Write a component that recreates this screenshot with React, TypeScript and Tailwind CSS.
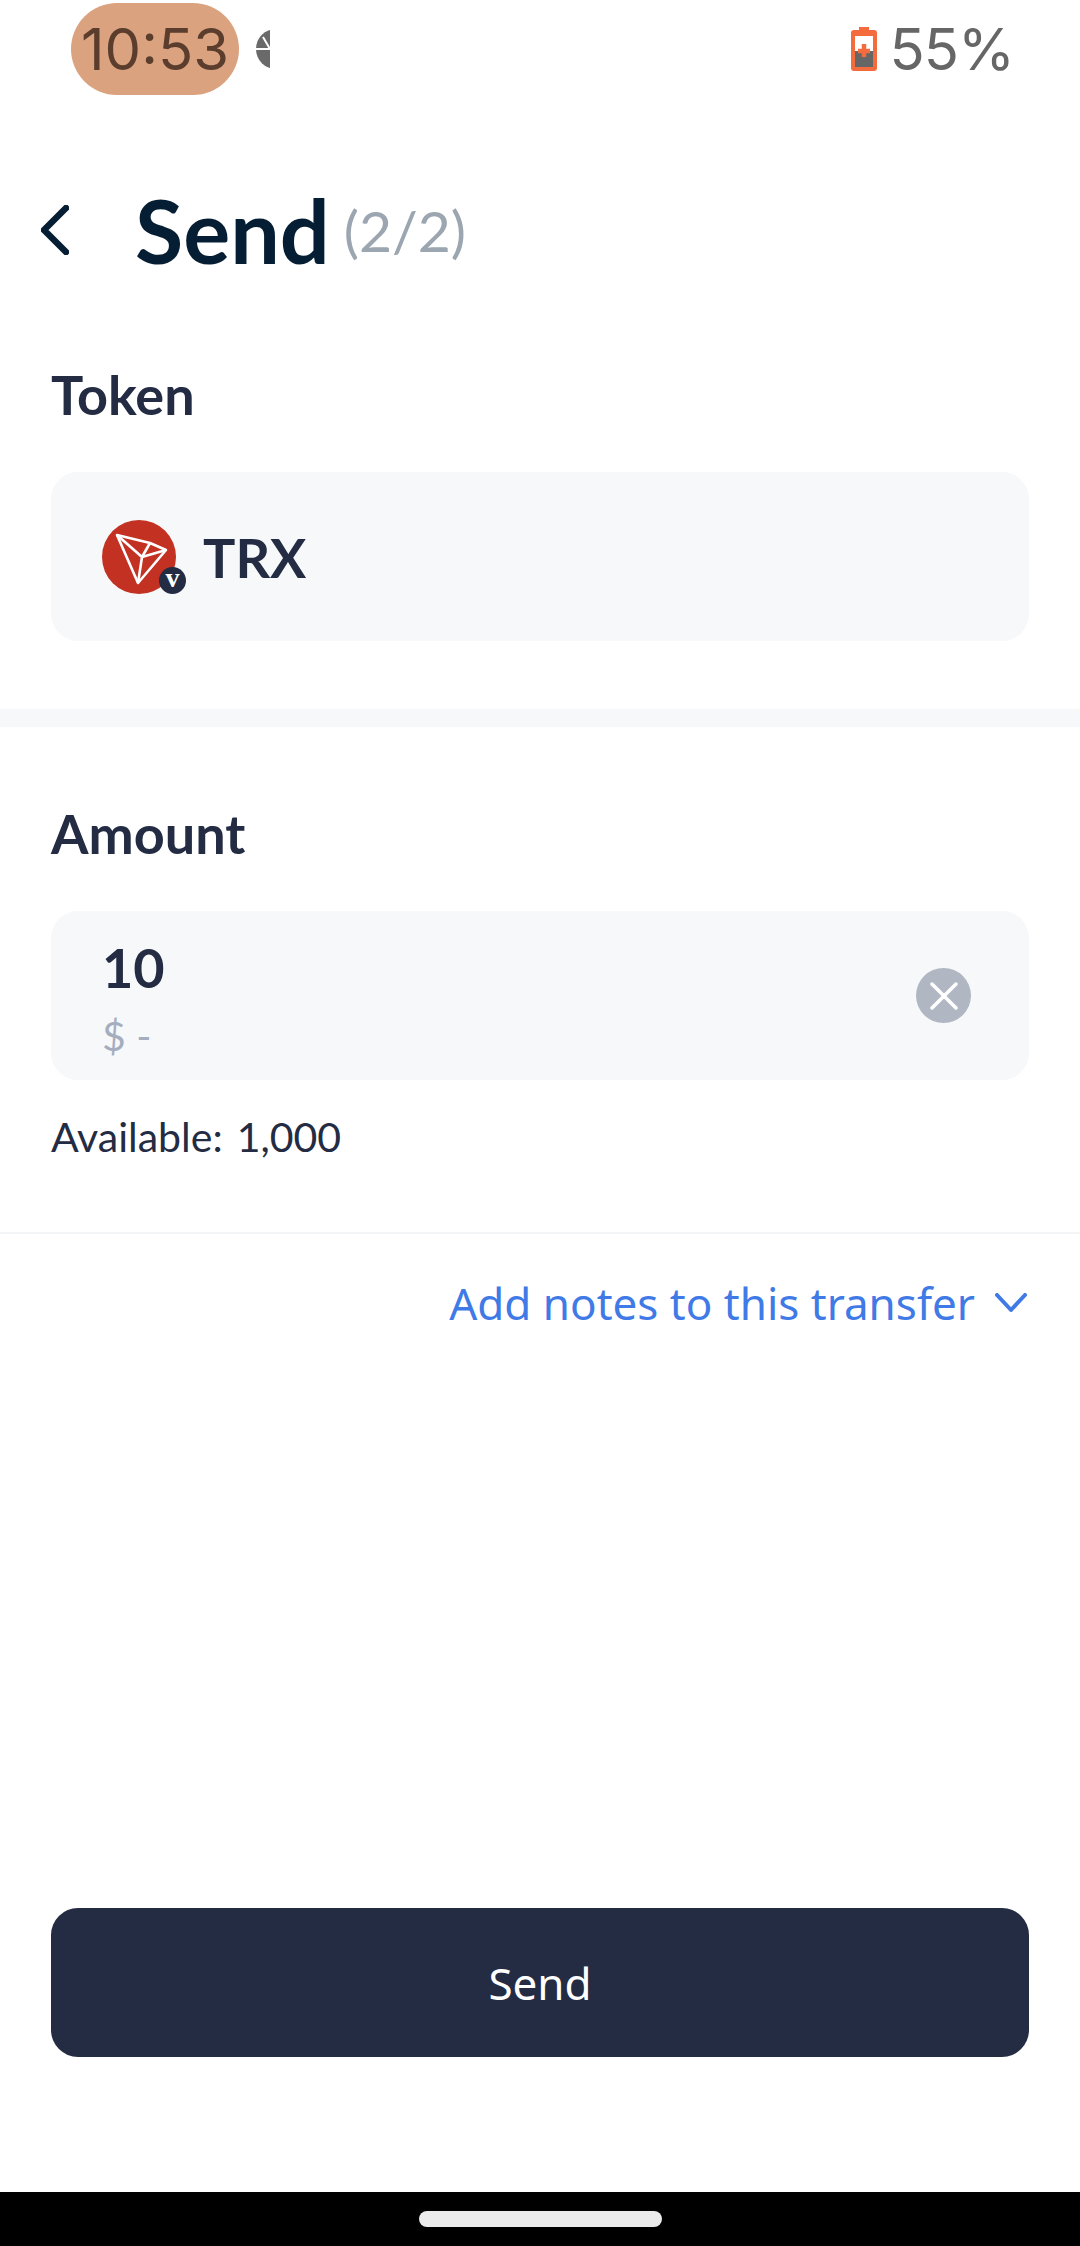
const lato = "font-['Lato',sans-serif]";

const Field = ({ children }: { children: React.ReactNode }) => (
	<div className="flex items-center justify-between h-[169px] rounded-[27px] bg-[#f7f8fa] pl-[51px] pr-[58px]">{children}</div>
);

const TronIcon = () => (
	<div className="relative w-[74px] h-[74px]">
		<svg viewBox="0 0 74 74" className="w-[74px] h-[74px]">
			<circle cx="37" cy="37" r="37" fill="#c23122" />
			<g fill="none" stroke="#fff" strokeWidth="2.6" strokeLinejoin="round">
				<path d="M15 15 L36 63 L64 30 L48 23 Z" />
				<path d="M15 15 L40 37 L36 63" />
				<path d="M40 37 L64 30" />
				<path d="M40 37 L48 23" />
			</g>
		</svg>
		<div className="absolute right-[-10px] bottom-0 w-[27px] h-[27px] rounded-full bg-[#232c43] flex items-center justify-center text-white text-[28px] pb-[4px] font-bold leading-none font-['Liberation_Serif',serif]">
			v
		</div>
	</div>
);

export default function App() {
	return (
		<div className={`w-[1080px] h-[2246px] bg-white flex flex-col overflow-hidden ${lato}`}>
			{/* status bar */}
			<div className="flex items-center h-[92px] mt-[3px] pl-[71px] pr-[66px] font-['Inter',sans-serif]">
				<div className="flex items-center justify-center w-[168px] h-[92px] rounded-full bg-[#dba27f] text-[#5a3d2d] text-[58px] leading-none">
					10:53
				</div>
				<svg viewBox="0 0 14 40" className="w-[14px] h-[40px] ml-[17px]">
					<path d="M20 0 A20 20 0 1 0 20 40 Z" fill="#6a6a6a" />
					<path d="M7 8 L14 20 M0 20 H14" stroke="#fff" strokeWidth="2" />
				</svg>
				<svg viewBox="0 0 26 44" className="w-[28px] h-[44px] ml-auto">
					<path d="M8 0 H18 V3 H23 Q26 3 26 6 V41 Q26 44 23 44 H3 Q0 44 0 41 V6 Q0 3 3 3 H8 Z" fill="#f46b3d" />
					<rect x="4" y="9" width="18" height="31" fill="#fff" />
					<rect x="4" y="24" width="18" height="16" fill="#666" />
					<path d="M13 17 V30 M7 24 H19" stroke="#f46b3d" strokeWidth="4.5" />
				</svg>
				<span className="ml-[12px] text-[#666] text-[58px] tracking-[-1px] leading-none">55%</span>
			</div>

			{/* header */}
			<div className="flex items-center h-[100px] mt-[85px] pl-[41px]">
				<svg viewBox="0 0 28 50" className="w-[28px] h-[50px]">
					<path d="M25 3 L3 25 L25 47" fill="none" stroke="#051e33" strokeWidth="6.5" strokeLinecap="round" strokeLinejoin="round" />
				</svg>
				<h1 className="ml-[66px] text-[88px] font-bold leading-none text-[#051e33]">Send</h1>
				<span className="ml-[14px] mt-[1px] text-[57px] leading-none text-[#9ba6b0]">(2/2)</span>
			</div>

			<div className="px-[51px] mt-[85px]">
				<h2 className="text-[54px] font-bold leading-[60px] text-[#232c43]">Token</h2>
				<div className="mt-[47px]">
					<Field>
						<div className="flex items-center">
							<TronIcon />
							<span className="ml-[27px] mt-[2px] text-[54px] font-bold leading-none text-[#232c43]">TRX</span>
						</div>
					</Field>
				</div>
			</div>

			<div className="h-[18px] mt-[68px] bg-[#f7f8fa]" />

			<div className="px-[51px] mt-[77px]">
				<h2 className="text-[54px] font-bold leading-[60px] text-[#232c43]">Amount</h2>
				<div className="mt-[47px]">
					<Field>
						<div className="flex flex-col pt-[6px]">
							<span className="text-[54px] font-bold leading-[60px] text-[#232c43]">10</span>
							<span className="mt-[15px] text-[41px] leading-[46px] text-[#a5aebf]">$ -</span>
						</div>
						<div className="flex items-center justify-center w-[55px] h-[55px] rounded-full bg-[#b1b7c2]">
							<svg viewBox="0 0 28 28" className="w-[28px] h-[28px]">
								<path d="M2 2 L26 26 M26 2 L2 26" stroke="#fff" strokeWidth="3.5" strokeLinecap="round" />
							</svg>
						</div>
					</Field>
				</div>
				<p className="flex gap-[14px] mt-[34px] text-[41px] leading-[46px] text-[#232c43]">
					<span>Available:</span>
					<span>1,000</span>
				</p>
			</div>

			<div className="h-[2px] mt-[72px] bg-[#f3f4f6]" />

			<div className="flex items-center justify-end gap-[20px] mt-[41px] pr-[53px] text-[#3f7ae6]">
				<span className="text-[44px] leading-[56px] font-['Noto_Sans',sans-serif]">Add notes to this transfer</span>
				<svg viewBox="0 0 32 20" className="w-[32px] h-[20px]">
					<path d="M2 2 L16 17 L30 2" fill="none" stroke="#3f7ae6" strokeWidth="4" strokeLinecap="round" strokeLinejoin="round" />
				</svg>
			</div>

			<div className="mt-auto px-[51px]">
				<button className="w-full h-[149px] rounded-[27px] bg-[#232c43] text-white text-[44px] font-['Noto_Sans',sans-serif]">
					Send
				</button>
			</div>

			<div className="flex items-center justify-center h-[54px] mt-[135px] bg-black">
				<div className="w-[243px] h-[16px] rounded-full bg-[#ebebeb]" />
			</div>
		</div>
	);
}
